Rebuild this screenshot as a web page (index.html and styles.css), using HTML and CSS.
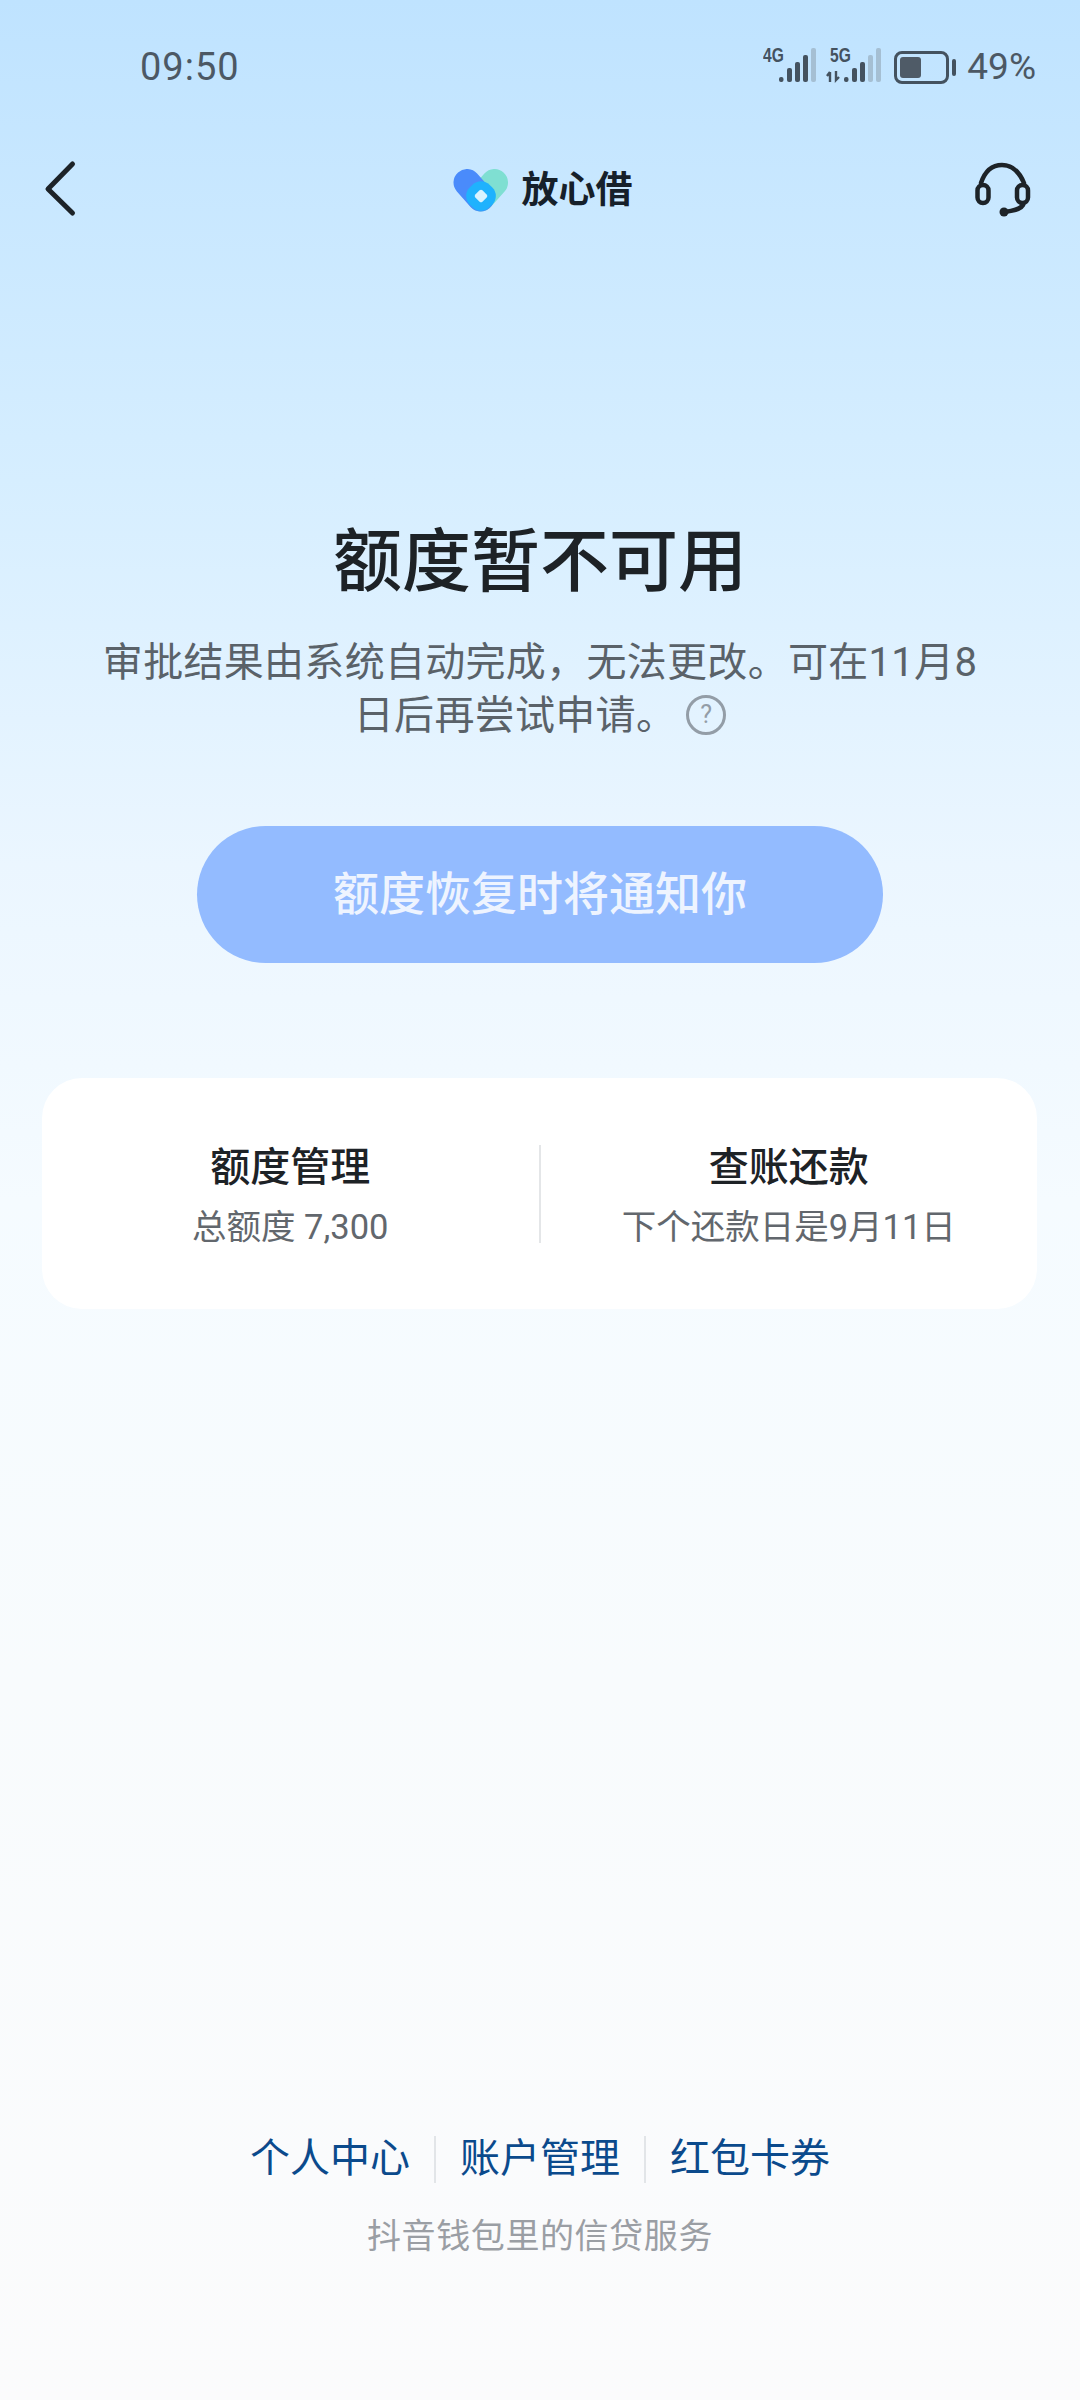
FILE: index.html
```html
<!DOCTYPE html>
<html lang="zh-CN">

<head>
  <meta charset="UTF-8" />
  <meta name="viewport" content="width=device-width, initial-scale=1.0" />
  <title>放心借</title>
  <link rel="stylesheet" href="styles.css">
</head>

<body>
  <div class="page">
    <div class="status">
      <span class="time">09:50</span>
      <div class="status-right">
        <svg class="net" width="56" height="36" viewBox="0 0 56 36">
          <rect x="19" y="29" width="4.5" height="5" rx="2" fill="#44525f" />
          <rect x="27" y="20" width="5" height="14" rx="2" fill="#44525f" />
          <rect x="35" y="14" width="5" height="20" rx="2" fill="#44525f" />
          <rect x="43" y="7" width="5" height="27" rx="2" fill="#44525f" />
          <rect x="51" y="0" width="5" height="34" rx="2" fill="#a5bfd3" />
        </svg>
        <span class="net-label net-label-4g">4G</span>
        <svg class="net net-5g" width="56" height="36" viewBox="0 0 56 36">
          <path d="M4 24v10M1 28l3-4M10 23v9l3-3" fill="none" stroke="#44525f" stroke-width="2.4" />
          <rect x="18" y="29" width="4.5" height="5" rx="2" fill="#44525f" />
          <rect x="26" y="20" width="5" height="14" rx="2" fill="#44525f" />
          <rect x="34" y="14" width="5" height="20" rx="2" fill="#44525f" />
          <rect x="42" y="7" width="5" height="27" rx="2" fill="#a5bfd3" />
          <rect x="50" y="0" width="5" height="34" rx="2" fill="#a5bfd3" />
        </svg>
        <span class="net-label net-label-5g">5G</span>
        <div class="battery">
          <div class="battery-body">
            <div class="battery-fill"></div>
          </div>
          <div class="battery-tip"></div>
        </div>
        <span class="percent">49%</span>
      </div>
    </div>

    <div class="nav">
      <svg class="back" width="80" height="80" viewBox="0 0 80 80">
        <path d="M52.500 24 L28 49 L52.500 73" fill="none" stroke="#1d2328" stroke-width="5" stroke-linecap="round" stroke-linejoin="round" />
      </svg>
      <div class="logo">
        <svg width="55" height="44" viewBox="0 0 55 44">
          <line x1="41.500" y1="13.500" x2="27.700" y2="29" stroke="#7fdfd2" stroke-width="27" stroke-linecap="round" />
          <line x1="14" y1="13.500" x2="27.700" y2="29" stroke="#4a8bfb" stroke-width="27" stroke-linecap="round" />
          <rect x="14" y="13" width="28" height="28" rx="12" transform="rotate(45 28 27)" fill="#1fb2fd" />
          <rect x="23" y="22" width="10" height="10" rx="2" transform="rotate(45 28 27)" fill="#d9f3ff" />
        </svg>
        <span class="logo-text">放心借</span>
      </div>
      <svg class="support" width="80" height="80" viewBox="0 0 80 80">
        <g fill="none" stroke="#1d2328" stroke-width="4.500" stroke-linecap="round" stroke-linejoin="round">
          <path d="M21 35 C25 23 32 17 42 17 C52 17 59 23 64 35" />
          <rect x="17.500" y="37" width="11" height="18" rx="5.500" />
          <rect x="57" y="37" width="11" height="18" rx="5.500" />
          <path d="M63 57 C60 62 54 62 46 64" />
        </g>
        <circle cx="44" cy="64" r="4.500" fill="#1d2328" />
      </svg>
    </div>

    <div class="main">
      <h1 class="title">额度暂不可用</h1>
      <p class="desc">审批结果由系统自动完成，无法更改。可在11月8</p>
      <div class="desc-row">
        <p class="desc">日后再尝试申请。</p>
        <span class="help">?</span>
      </div>
      <div class="btn">额度恢复时将通知你</div>

      <div class="card">
        <div class="card-item">
          <div class="card-title">额度管理</div>
          <div class="card-sub">总额度 7,300</div>
        </div>
        <div class="card-line"></div>
        <div class="card-item">
          <div class="card-title">查账还款</div>
          <div class="card-sub">下个还款日是9月11日</div>
        </div>
      </div>
    </div>

    <div class="footer">
      <div class="links">
        <span class="link">个人中心</span>
        <span class="link-line"></span>
        <span class="link">账户管理</span>
        <span class="link-line"></span>
        <span class="link">红包卡券</span>
      </div>
      <div class="footer-note">抖音钱包里的信贷服务</div>
    </div>
  </div>
</body>

</html>
```

FILE: styles.css
```css
* {
  margin: 0px;
  padding: 0px;
  box-sizing: border-box;
}

body {
  font-family: Roboto, "Noto Sans CJK SC", sans-serif;
}

.page {
  width: 1080px;
  height: 2400px;
  display: flex;
  flex-direction: column;
  background: linear-gradient(180deg, #bfe3ff 0%, #d6eeff 20%, #ebf6ff 36%, #f5fbff 50%, #f8fbfd 70%, #fbfbfc 100%);
}

/* status bar */
.status {
  height: 134px;
  display: flex;
  justify-content: space-between;
  align-items: flex-start;
  padding: 44px 44px 0 140px;
  color: #4c5864;
}

.time {
  font-size: 38px;
  line-height: 46px;
  letter-spacing: 1px;
}

.status-right {
  position: relative;
  display: flex;
  align-items: center;
  height: 46px;
}

.net {
  margin-top: -2px;
  margin-right: 10px;
}

.net-label {
  position: absolute;
  top: 1px;
  font-family: "Liberation Sans", sans-serif;
  font-size: 20px;
  line-height: 20px;
  font-weight: 700;
  color: #44525f;
  transform: scaleX(0.78);
  transform-origin: left;
}

.net-label-4g {
  left: 3px;
}

.net-label-5g {
  left: 70px;
}

.battery {
  display: flex;
  align-items: center;
  gap: 3px;
  margin-left: 2px;
  margin-right: 11px;
}

.battery-body {
  width: 55px;
  height: 33px;
  border: 3.5px solid #44525f;
  border-radius: 8px;
  padding: 3px;
}

.battery-fill {
  width: 21px;
  height: 100%;
  background-color: #4f5b67;
  border-radius: 3px;
}

.battery-tip {
  width: 4px;
  height: 17px;
  background-color: #44525f;
  border-radius: 2px;
}

.percent {
  font-size: 37px;
  line-height: 46px;
}

/* nav */
.nav {
  height: 110px;
  display: flex;
  justify-content: space-between;
  align-items: center;
  padding: 0 40px 0 20px;
  position: relative;
}

.back {
  margin-top: -18px;
}

.support {
  margin-top: -2px;
}

.logo {
  display: flex;
  align-items: center;
  gap: 14px;
  margin-left: 25px;
  margin-top: 3px;
}

.logo-text {
  font-size: 37px;
  font-weight: 700;
  color: #16202a;
  line-height: 44px;
}

/* main block */
.main {
  display: flex;
  flex-direction: column;
  align-items: center;
  padding-top: 279px;
}

.title {
  font-size: 69px;
  line-height: 80px;
  font-weight: 500;
  color: #1d2226;
}

.title + .desc {
  margin-top: 33px;
}

.desc {
  font-size: 40px;
  line-height: 53px;
  letter-spacing: 0.3px;
  text-align: center;
  color: #5a6269;
}

.desc-row {
  display: flex;
  align-items: center;
  gap: 10px;
}

.help {
  width: 40px;
  height: 40px;
  margin-top: -2px;
  border: 3px solid #939da7;
  border-radius: 50%;
  font-size: 25px;
  line-height: 34px;
  text-align: center;
  color: #939da7;
}

.btn {
  width: 686px;
  height: 137px;
  margin-top: 84px;
  background-color: #93bbff;
  border-radius: 69px;
  color: #eef4ff;
  font-size: 46px;
  font-weight: 500;
  line-height: 137px;
  text-align: center;
}

.card {
  width: 995px;
  height: 231px;
  margin-top: 115px;
  margin-left: -1px;
  background-color: #fff;
  border-radius: 40px;
  display: flex;
  align-items: center;
}

.card-item {
  flex: 1;
  padding-top: 5px;
  text-align: center;
}

.card-title {
  font-size: 40px;
  line-height: 56px;
  font-weight: 500;
  color: #1d2226;
}

.card-sub {
  margin-top: 6px;
  font-size: 34.5px;
  line-height: 50px;
  color: #62676d;
}

.card-line {
  width: 2px;
  height: 98px;
  background-color: #e4e6e8;
}

/* footer */
.footer {
  margin-top: auto;
  padding-bottom: 140px;
  display: flex;
  flex-direction: column;
  align-items: center;
}

.links {
  display: flex;
  align-items: center;
  gap: 24px;
}

.link {
  font-size: 40px;
  line-height: 56px;
  color: #0b4a8c;
}

.link-line {
  width: 2px;
  height: 47px;
  background-color: #e2e5e8;
}

.footer-note {
  margin-top: 25px;
  font-size: 34px;
  line-height: 48px;
  letter-spacing: 0.6px;
  color: #9a9ea4;
}
```
